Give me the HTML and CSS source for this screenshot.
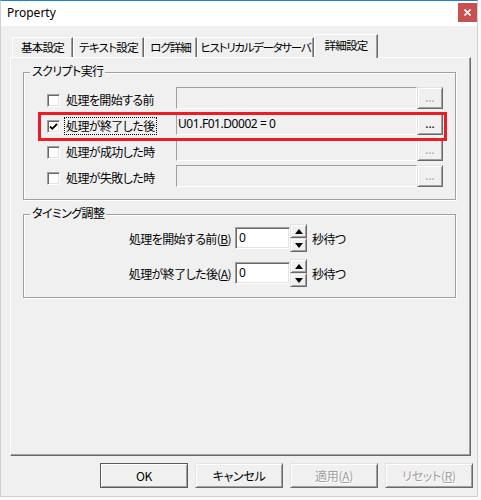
FILE: index.html
```html
<!DOCTYPE html>
<html lang="ja">
<head>
<meta charset="utf-8">
<title>Property</title>
<link rel="stylesheet" href="styles.css">
</head>
<body>
<div class="window">
  <div class="titlebar">
    <span class="title">Property</span>
    <span class="close"><svg width="7" height="7" viewBox="0 0 7 7"><path d="M0.5 0.5 L6.5 6.5 M6.5 0.5 L0.5 6.5" stroke="#fff" stroke-width="1.6"/></svg></span>
  </div>
  <div class="content">
    <div class="tabs">
      <div class="tab w1">基本設定</div>
      <div class="tab w2">テキスト設定</div>
      <div class="tab w3">ログ詳細</div>
      <div class="tab w4">ヒストリカルデータサーバ</div>
      <div class="tab sel w5">詳細設定</div>
    </div>
    <div class="panel">
      <div class="group g1">
        <div class="gtitle">スクリプト実行</div>
        <div class="srows">
          <div class="srow">
            <div class="chkwrap"><span class="chk"></span><span class="clabel">処理を開始する前</span></div>
            <div class="field"></div>
            <div class="dots raised dis">...</div>
          </div>
          <div class="srow">
            <div class="chkwrap"><span class="chk"><svg width="9" height="9" viewBox="0 0 9 9"><path d="M1 4.5 L3.3 6.8 L8 2" fill="none" stroke="#000" stroke-width="1.8"/></svg></span><span class="clabel focus">処理が終了した後</span></div>
            <div class="field val">U01.F01.D0002 = 0</div>
            <div class="dots raised">...</div>
          </div>
          <div class="srow">
            <div class="chkwrap"><span class="chk"></span><span class="clabel">処理が成功した時</span></div>
            <div class="field"></div>
            <div class="dots raised dis">...</div>
          </div>
          <div class="srow">
            <div class="chkwrap"><span class="chk"></span><span class="clabel">処理が失敗した時</span></div>
            <div class="field"></div>
            <div class="dots raised dis">...</div>
          </div>
        </div>
        <div class="annot"></div>
      </div>
      <div class="group g2">
        <div class="gtitle">タイミング調整</div>
        <div class="trows">
          <div class="trow">
            <span class="tlabel">処理を開始する前(<u>B</u>)</span>
            <div class="num">0</div>
            <div class="spin"><div class="sbtn raised"><span class="up"></span></div><div class="sbtn raised"><span class="down"></span></div></div>
            <span class="unit">秒待つ</span>
          </div>
          <div class="trow">
            <span class="tlabel">処理が終了した後(<u>A</u>)</span>
            <div class="num">0</div>
            <div class="spin"><div class="sbtn raised"><span class="up"></span></div><div class="sbtn raised"><span class="down"></span></div></div>
            <span class="unit">秒待つ</span>
          </div>
        </div>
      </div>
    </div>
    <div class="buttons">
      <div class="btn raised def">OK</div>
      <div class="btn raised">キャンセル</div>
      <div class="btn raised dis">適用(<u>A</u>)</div>
      <div class="btn raised dis">リセット(<u>R</u>)</div>
    </div>
  </div>
</div>
</body>
</html>
```

FILE: styles.css
```css
* { box-sizing: border-box; }
html, body { margin: 0; padding: 0; }
body {
  background: #fafafa;
  width: 481px;
  height: 500px;
  overflow: hidden;
  font-family: "Noto Sans CJK JP", sans-serif;
  font-size: 12px;
  letter-spacing: -0.6px;
  color: #000;
  font-feature-settings: "palt";
}
.window {
  width: 478px;
  height: 497px;
  border: 1px solid #cfcfcf;
  border-top-color: #1883d7;
  background: #f0f0f0;
  display: flex;
  flex-direction: column;
}
.titlebar {
  height: 25px;
  flex: none;
  background: #fff;
  display: flex;
  justify-content: space-between;
  align-items: flex-start;
}
.title {
  font-family: "Noto Sans", sans-serif;
  font-size: 12px;
  line-height: 16px;
  letter-spacing: 0;
  margin: 4px 0 0 6px;
  font-feature-settings: normal;
}
.close {
  width: 19px;
  height: 19px;
  margin-top: 2px;
  background: #c75050;
  display: flex;
  align-items: center;
  justify-content: center;
}
.close svg { display: block; }
.content {
  flex: 1;
  padding: 8px 4px 0 9px;
  display: flex;
  flex-direction: column;
}
.tabs {
  height: 23px;
  display: flex;
  align-items: flex-end;
  padding-left: 2px;
}
.tab {
  flex: none;
  height: 20px;
  padding-bottom: 2px;
  display: flex;
  align-items: center;
  justify-content: center;
  border-left: 1px solid #fff;
  border-top: 1px solid #fff;
  border-right: 1px solid #696969;
  box-shadow: inset -1px 0 0 #a0a0a0;
  background: #f0f0f0;
  white-space: nowrap;
  font-size: 11.5px;
  letter-spacing: -0.7px;
}
.tab.sel {
  height: 24px;
  margin-bottom: -1px;
  padding-bottom: 4px;
  position: relative;
  z-index: 1;
}
.w1 { width: 61px; }
.w2 { width: 71px; }
.w3 { width: 53px; letter-spacing: -1px; }
.w4 { width: 117px; letter-spacing: -1.3px; }
.w5 { width: 64px; }
.panel {
  width: 461px;
  height: 399px;
  flex: none;
  border-left: 1px solid #fff;
  border-top: 1px solid #fff;
  border-right: 1px solid #696969;
  border-bottom: 1px solid #696969;
  box-shadow: inset -1px -1px 0 #a0a0a0;
  padding: 14px 0 0 12px;
}
.group {
  width: 433px;
  border: 1px solid #a0a0a0;
  box-shadow: 1px 1px 0 #fff, inset 1px 1px 0 #fff;
  position: relative;
}
.g1 { height: 128px; }
.g2 { height: 84px; margin-top: 14px; }
.gtitle {
  width: fit-content;
  margin: -10px 0 0 6px;
  padding: 0 2px;
  line-height: 16px;
  background: #f0f0f0;
}
.srows {
  margin-top: 8px;
  display: flex;
  flex-direction: column;
  gap: 4px;
}
.srow {
  height: 22px;
  display: flex;
}
.chkwrap {
  width: 152px;
  flex: none;
  display: flex;
  align-items: center;
  padding: 4px 0 0 23px;
}
.chk {
  width: 13px;
  height: 13px;
  flex: none;
  background: #fff;
  border-top: 1px solid #a0a0a0;
  border-left: 1px solid #a0a0a0;
  border-bottom: 1px solid #fff;
  border-right: 1px solid #fff;
  box-shadow: inset 1px 1px 0 #696969, inset -1px -1px 0 #e3e3e3;
  display: flex;
  align-items: center;
  justify-content: center;
}
.chk svg { display: block; }
.clabel {
  margin-left: 4px;
  padding: 0 1px;
  line-height: 16px;
  border: 1px dotted transparent;
  white-space: nowrap;
}
.clabel.focus { border-color: #000; }
.field {
  width: 241px;
  flex: none;
  background: #f0f0f0;
  border-top: 1px solid #a0a0a0;
  border-left: 1px solid #a0a0a0;
  border-bottom: 1px solid #fff;
  border-right: 1px solid #fff;
}
.field.val {
  font-family: "Noto Sans", sans-serif;
  font-feature-settings: normal;
  font-size: 12px;
  line-height: 20px;
  padding-left: 1px;
  letter-spacing: -0.45px;
}
.raised {
  background: #f0f0f0;
  border: 1px solid;
  border-color: #e3e3e3 #696969 #696969 #e3e3e3;
  box-shadow: inset 1px 1px 0 #fff, inset -1px -1px 0 #a0a0a0;
}
.dots {
  width: 26px;
  flex: none;
  display: flex;
  align-items: center;
  justify-content: center;
  font-family: "Noto Sans", sans-serif;
  font-size: 12px;
  letter-spacing: 0;
  line-height: 14px;
  padding-bottom: 1px;
}
.dis { color: #a0a0a0; text-shadow: 1px 1px 0 #fff; }
.annot {
  position: absolute;
  left: 14px;
  top: 39px;
  width: 409px;
  height: 29px;
  border: 3px solid #ec1c24;
}
.trows {
  margin-top: 3px;
  display: flex;
  flex-direction: column;
  gap: 7px;
}
.trow {
  height: 28px;
  display: flex;
  align-items: center;
}
.tlabel {
  width: 207px;
  flex: none;
  text-align: right;
  white-space: nowrap;
}
.num {
  width: 55px;
  height: 22px;
  margin-left: 4px;
  flex: none;
  background: #fff;
  border-top: 1px solid #a0a0a0;
  border-left: 1px solid #a0a0a0;
  border-bottom: 1px solid #fff;
  border-right: 1px solid #fff;
  box-shadow: inset 1px 1px 0 #696969, inset -1px -1px 0 #e3e3e3;
  padding-left: 3px;
  line-height: 19px;
  letter-spacing: 0;
  font-family: "Noto Sans", sans-serif;
  font-feature-settings: normal;
}
.spin {
  width: 17px;
  height: 28px;
  flex: none;
  display: flex;
  flex-direction: column;
}
.sbtn {
  flex: 1;
  display: flex;
  align-items: center;
  justify-content: center;
}
.up {
  width: 0;
  height: 0;
  border-left: 4px solid transparent;
  border-right: 4px solid transparent;
  border-bottom: 5px solid #000;
}
.down {
  width: 0;
  height: 0;
  border-left: 4px solid transparent;
  border-right: 4px solid transparent;
  border-top: 5px solid #000;
}
.unit {
  margin-left: 5px;
  white-space: nowrap;
}
.buttons {
  margin-top: 7px;
  display: flex;
  justify-content: flex-end;
  gap: 7px;
}
.btn {
  width: 88px;
  height: 25px;
  display: flex;
  align-items: center;
  justify-content: center;
  white-space: nowrap;
  letter-spacing: -0.3px;
}
.btn.def {
  border-color: #5a5a5a;
}
u { text-underline-offset: 1px; }
```
